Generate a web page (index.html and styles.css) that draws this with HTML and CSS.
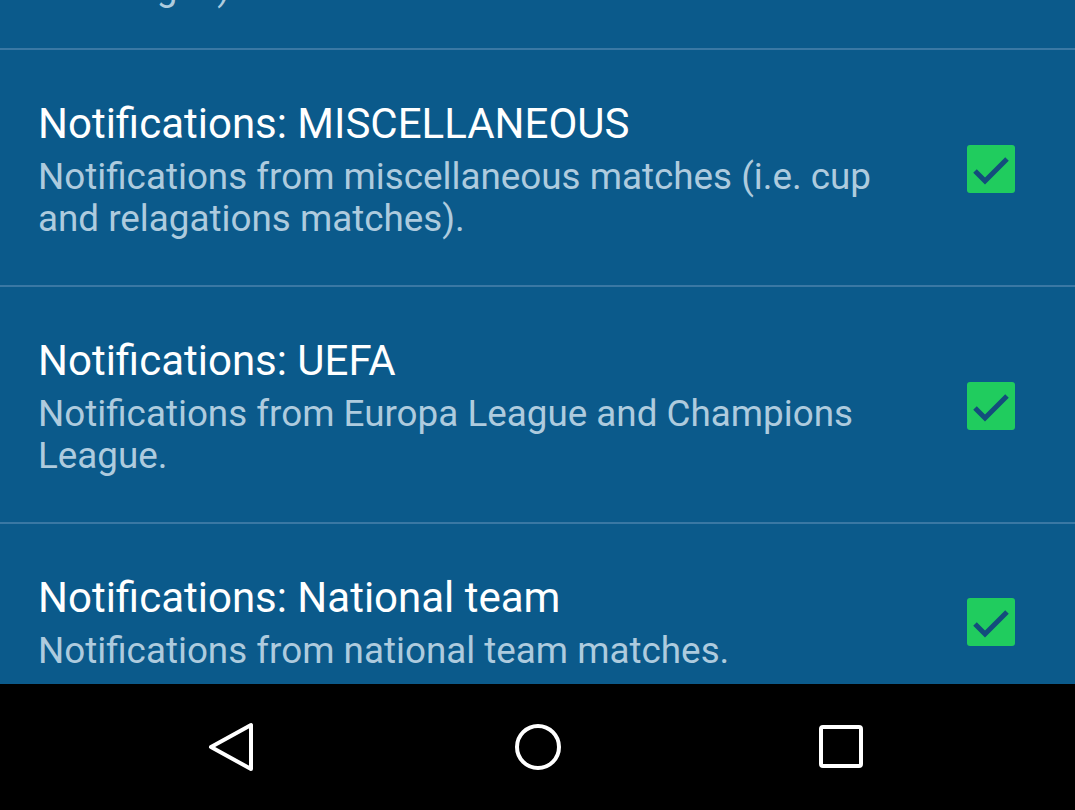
FILE: index.html
```html
<!DOCTYPE html>
<html>
<head>
<meta charset="utf-8">
<link rel="stylesheet" href="styles.css">
</head>
<body>
<div class="screen">
  <div class="list">
    <div class="item prev">
      <div class="text">
        <div class="desc">and league).</div>
      </div>
    </div>
    <div class="item">
      <div class="text">
        <div class="title">Notifications: MISCELLANEOUS</div>
        <div class="desc">Notifications from miscellaneous matches (i.e. cup and relagations matches).</div>
      </div>
      <svg class="check" viewBox="0 0 48 48" width="48" height="48"><rect x="0" y="0" width="48" height="48" rx="3" fill="#20cc5e"/><path d="M8 26 L18 36 L40 14" fill="none" stroke="#134d7c" stroke-width="5"/></svg>
    </div>
    <div class="item">
      <div class="text">
        <div class="title">Notifications: UEFA</div>
        <div class="desc">Notifications from Europa League and Champions League.</div>
      </div>
      <svg class="check" viewBox="0 0 48 48" width="48" height="48"><rect x="0" y="0" width="48" height="48" rx="3" fill="#20cc5e"/><path d="M8 26 L18 36 L40 14" fill="none" stroke="#134d7c" stroke-width="5"/></svg>
    </div>
    <div class="item">
      <div class="text">
        <div class="title">Notifications: National team</div>
        <div class="desc">Notifications from national team matches.</div>
      </div>
      <svg class="check" viewBox="0 0 48 48" width="48" height="48"><rect x="0" y="0" width="48" height="48" rx="3" fill="#20cc5e"/><path d="M8 26 L18 36 L40 14" fill="none" stroke="#134d7c" stroke-width="5"/></svg>
    </div>
  </div>
  <div class="navbar">
    <svg class="nav-icon" viewBox="0 0 60 60" width="60" height="60"><path d="M46 2 L46 46 L6 24 Z" transform="translate(0,6)" fill="none" stroke="#fff" stroke-width="4" stroke-linejoin="round"/></svg>
    <svg class="nav-icon" viewBox="0 0 60 60" width="60" height="60"><circle cx="30" cy="30" r="21" fill="none" stroke="#fff" stroke-width="4"/></svg>
    <svg class="nav-icon" viewBox="0 0 60 60" width="60" height="60"><rect x="10" y="10" width="40" height="39" rx="2" fill="none" stroke="#fff" stroke-width="4"/></svg>
  </div>
</div>
</body>
</html>
```
FILE: styles.css
```css
html, body {
  margin: 0;
  padding: 0;
  background: #000;
}
.screen {
  width: 1075px;
  height: 810px;
  display: flex;
  flex-direction: column;
  overflow: hidden;
  background: #0b5a8b;
  font-family: Roboto, "Noto Sans", sans-serif;
}
.list {
  height: 684px;
  overflow: hidden;
  flex: none;
}
.item {
  display: flex;
  align-items: center;
  padding: 50px 60px 45px 38px;
  border-bottom: 2px solid #3a78a4;
}
.item.prev {
  margin-top: -33px;
  padding-top: 0;
  padding-bottom: 39px;
}
.text {
  width: 880px;
  flex: none;
}
.title {
  color: #ffffff;
  font-size: 42px;
  line-height: 48px;
  margin-bottom: 8px;
}
.desc {
  color: #aecbde;
  font-size: 36.8px;
  line-height: 42px;
}
.check {
  margin-left: auto;
  margin-top: -3px;
  flex: none;
}
.navbar {
  flex: 1;
  background: #000;
  display: flex;
  justify-content: center;
  align-items: center;
  gap: 243px;
}
.nav-icon {
  flex: none;
}
```
